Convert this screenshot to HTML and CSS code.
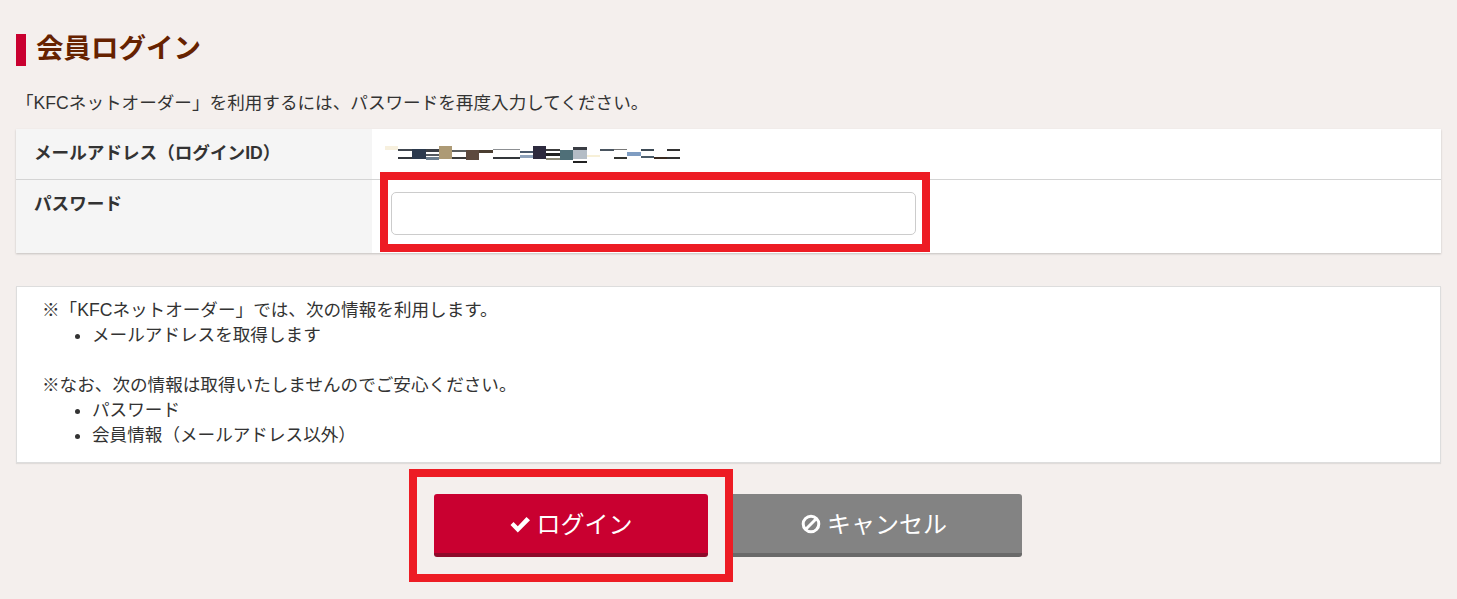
FILE: index.html
```html
<!DOCTYPE html>
<html lang="ja">

<head>
    <title>会員ログイン</title>
    <meta charset="UTF-8">
    <link rel="stylesheet" href="styles.css">
</head>

<body>

    <h1 class="page-title">会員ログイン</h1>
    <p class="lead">「KFCネットオーダー」を利用するには、パスワードを再度入力してください。</p>

    <table class="form-table">
        <tr class="row-mail">
            <th>メールアドレス（ログインID）</th>
            <td>
                <!-- 塗りつぶされたメールアドレス -->
                <svg class="mosaic" width="296" height="18" viewBox="0 0 296 18">
                    <rect x="0" y="0" width="13" height="4" fill="#f7f0de" />
                    <rect x="13" y="3" width="14" height="2" fill="#40464f" />
                    <rect x="13" y="11" width="14" height="2" fill="#33373d" />
                    <rect x="27" y="3" width="14" height="10" fill="#2c3a4e" />
                    <rect x="41" y="3" width="13" height="3" fill="#3b3f46" />
                    <rect x="41" y="8" width="13" height="2" fill="#555a60" />
                    <rect x="41" y="11" width="13" height="3" fill="#6d7f8f" />
                    <rect x="54" y="0" width="13" height="13" fill="#ad9a75" />
                    <rect x="67" y="4" width="14" height="2" fill="#5c5f5f" />
                    <rect x="67" y="11" width="14" height="2" fill="#3a3b3b" />
                    <rect x="81" y="4" width="13" height="10" fill="#5d4a3e" />
                    <rect x="94" y="4" width="14" height="3" fill="#4a3d30" />
                    <rect x="108" y="11" width="27" height="2" fill="#33363a" />
                    <rect x="108" y="3" width="27" height="1" fill="#8c8f92" />
                    <rect x="135" y="5" width="13" height="2" fill="#49586b" />
                    <rect x="135" y="9" width="13" height="3" fill="#8fa3bc" />
                    <rect x="148" y="0" width="13" height="13" fill="#2d2a3e" />
                    <rect x="161" y="3" width="14" height="2" fill="#3c3c3c" />
                    <rect x="161" y="7" width="14" height="3" fill="#222" />
                    <rect x="161" y="12" width="14" height="2" fill="#8d8a78" />
                    <rect x="175" y="4" width="13" height="10" fill="#4f6f78" />
                    <rect x="188" y="1" width="14" height="3" fill="#3a3d44" />
                    <rect x="188" y="4" width="14" height="9" fill="#b4bdc6" />
                    <rect x="188" y="15" width="14" height="2" fill="#222" />
                    <rect x="202" y="9" width="13" height="2" fill="#f7f0d8" />
                    <rect x="215" y="3" width="14" height="2" fill="#4a5560" />
                    <rect x="229" y="11" width="13" height="2" fill="#33332f" />
                    <rect x="229" y="3" width="13" height="1" fill="#777" />
                    <rect x="242" y="6" width="14" height="4" fill="#7f9dc2" />
                    <rect x="256" y="3" width="13" height="2" fill="#3d4a55" />
                    <rect x="256" y="10" width="13" height="2" fill="#4a5b69" />
                    <rect x="269" y="11" width="13" height="2" fill="#3a2a20" />
                    <rect x="282" y="3" width="13" height="2" fill="#333" />
                    <rect x="282" y="11" width="13" height="2" fill="#333" />
                </svg>
            </td>
        </tr>
        <tr class="row-pass">
            <th>パスワード</th>
            <td><input type="password" class="text-input"></td>
        </tr>
    </table>

    <div class="notice">
        <p>※「KFCネットオーダー」では、次の情報を利用します。</p>
        <ul>
            <li>メールアドレスを取得します</li>
        </ul>
        <br>
        <p>※なお、次の情報は取得いたしませんのでご安心ください。</p>
        <ul>
            <li>パスワード</li>
            <li>会員情報（メールアドレス以外）</li>
        </ul>
    </div>

    <div class="buttons">
        <a class="btn btn-login">
            <svg class="icon" width="21" height="17" viewBox="0 0 21 17">
                <path d="M0.5 9 L3.5 6 L7.8 10.2 L16.5 1 L20 4.2 L7.8 16.5 Z" fill="#fff" />
            </svg>ログイン
        </a>
        <a class="btn btn-cancel">
            <svg class="icon" width="20" height="20" viewBox="0 0 20 20">
                <circle cx="10" cy="10" r="7.8" fill="none" stroke="#fff" stroke-width="3" />
                <path d="M4.8 15.2 L15.2 4.8" stroke="#fff" stroke-width="3" />
            </svg>キャンセル
        </a>
    </div>

    <!-- 赤枠の注釈 -->
    <div class="mark mark-input"></div>
    <div class="mark mark-login"></div>

</body>

</html>
```

FILE: styles.css
```css
* {
    box-sizing: border-box;
}

body {
    margin: 0;
    padding: 34px 16px 0;
    height: 599px;
    overflow: hidden;
    position: relative;
    background: #f4efed;
    color: #333;
    font-family: "Liberation Sans", "Noto Sans CJK JP", sans-serif;
    font-size: 17.6px;
}

.page-title {
    margin: 0;
    height: 32px;
    padding-left: 10px;
    border-left: 10px solid #c90030;
    color: #662200;
    font-size: 27.5px;
    font-weight: bold;
    line-height: 30px;
}

.lead {
    margin: 25px 0 0;
    height: 38px;
    line-height: 24px;
}

.form-table {
    width: 1425px;
    border-collapse: collapse;
    background: #fff;
    box-shadow: 0 1px 2px rgba(0, 0, 0, 0.2);
}

.form-table th {
    width: 356px;
    padding: 11px 18px;
    background: #f5f5f5;
    font-size: 17.6px;
    font-weight: bold;
    text-align: left;
    vertical-align: top;
    line-height: 26px;
}

.form-table td {
    padding: 12px 19px;
    vertical-align: top;
}

.row-mail {
    height: 50px;
    border-bottom: 1px solid #d4d4d4;
}

.row-pass {
    height: 74px;
}

.row-mail td {
    padding: 17px 13px 0;
}

.mosaic {
    display: block;
}

.text-input {
    display: block;
    width: 525px;
    height: 43px;
    background: #fff;
    border: 1px solid #ccc;
    border-radius: 5px;
}

.notice {
    width: 1425px;
    height: 177px;
    margin-top: 33px;
    padding: 11px 25px;
    background: #fff;
    border: 1px solid #ddd;
    line-height: 25px;
    box-shadow: 0 1px 1px rgba(0, 0, 0, 0.08);
}

.notice p,
.notice ul {
    margin: 0;
}

.notice ul {
    padding-left: 50px;
}

.buttons {
    display: flex;
    gap: 18px;
    margin-top: 31px;
    padding-left: 418px;
}

.btn {
    display: flex;
    align-items: center;
    justify-content: center;
    height: 63px;
    padding-bottom: 3px;
    border-radius: 3px;
    color: #fff;
    font-size: 24px;
}

.btn-login {
    width: 274px;
    background: #c90030;
    border-bottom: 4px solid #8e0a2a;
}

.btn-cancel {
    width: 296px;
    background: #838383;
    border-bottom: 4px solid #6a6a6a;
}

.icon {
    margin: 4px 6px 0 0;
}

.mark {
    position: absolute;
    border: 8px solid #ed1c24;
}

.mark-input {
    left: 380px;
    top: 172px;
    width: 550px;
    height: 80px;
}

.mark-login {
    left: 409px;
    top: 469px;
    width: 324px;
    height: 113px;
}
```
